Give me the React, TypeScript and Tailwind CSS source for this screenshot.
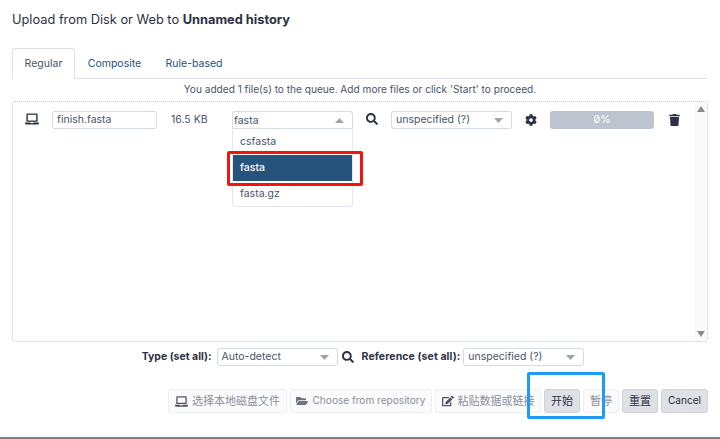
import { FaLaptop, FaSearch, FaCog, FaTrash, FaFolderOpen, FaEdit } from 'react-icons/fa';

const font = { fontFamily: 'Inter, "Noto Sans CJK SC", sans-serif' };

const Caret = ({ up = false }: { up?: boolean }) => (
    <svg width="9" height="5" viewBox="0 0 9 5" className="shrink-0">
        <path d={up ? 'M4.5 0L9 5H0z' : 'M0 0h9L4.5 5z'} fill="#9ca3af" />
    </svg>
);

const SelectBox = ({ label, className }: { label: string; className: string }) => (
    <div className={`h-[18px] flex items-center justify-between pl-1 pr-2 bg-white border border-[#d5dae3] rounded-[3px] text-[10.5px] text-[#4b5468] ${className}`}>
        <span>{label}</span>
        <Caret />
    </div>
);

const FooterButton = ({ children, className }: { children: React.ReactNode; className: string }) => (
    <div className={`h-6 flex items-center justify-center gap-1 rounded-[3px] border whitespace-nowrap ${className}`}>{children}</div>
);

export default function App() {
    return (
        <div style={font} className="relative w-[720px] h-[439px] bg-white overflow-hidden border-b-2 border-[#7b7f86] text-[#2c3143]">
            <h1 className="pl-3 pt-[11px] h-[48px] text-[12.8px] leading-[18px] whitespace-nowrap">
                Upload from Disk or Web to <b className="font-bold">Unnamed history</b>
            </h1>

            <div className="ml-3 mr-[13px] h-[31px] flex border-b border-[#dee2e8] text-[10.5px] text-[#25537b]">
                <div className="w-[63px] h-[31px] pt-[1px] flex items-center justify-center bg-white border border-[#dee2e8] border-b-white rounded-t-[3px] text-[#4b5468]">Regular</div>
                <div className="w-[79px] pt-[2px] flex items-center justify-center">Composite</div>
                <div className="w-[80px] pt-[2px] flex items-center justify-center whitespace-nowrap">Rule-based</div>
            </div>

            <p className="h-[22px] flex items-center justify-center text-[10.1px] text-[#4b5468] whitespace-nowrap">
                You added 1 file(s) to the queue. Add more files or click 'Start' to proceed.
            </p>

            <div className="relative ml-3 mr-3 h-[241px] border border-dotted border-[#c4c8cf] rounded-[3px] flex">
                <div className="flex-1 flex items-start pt-[9px] h-fit">
                    <FaLaptop className="ml-3 mt-[1px] w-[14px] h-[14px] text-[#2c3143]" />
                    <div className="ml-[13px] w-[105px] h-[18px] flex items-center px-1 border border-[#d5dae3] rounded-[3px] text-[10.5px] text-[#4b5468]">finish.fasta</div>
                    <span className="ml-[14px] w-[61px] leading-[18px] text-[10.5px] text-[#4b5468]">16.5 KB</span>
                    <div className="w-[121px] h-[18px] flex items-center justify-between pl-[1px] pr-2 border border-[#d5dae3] rounded-t-[3px] text-[10.5px] text-[#4b5468]">
                        <span className="pt-[2px]">fasta</span>
                        <Caret up />
                    </div>
                    <FaSearch className="ml-[13px] mt-[2px] w-3 h-3 text-[#2c3143]" />
                    <SelectBox label="unspecified (?)" className="ml-[13px] w-[121px] pl-[4px]" />
                    <FaCog className="ml-[13px] mt-[3px] w-3 h-3 text-[#2c3143]" />
                    <div className="ml-[13px] w-[104px] h-[18px] flex items-center justify-center rounded-[3px] bg-[#bcc4cf] text-[10.5px] text-white slashed-zero">0%</div>
                    <FaTrash className="ml-[15px] mt-[3px] w-[11px] h-3 text-[#2c3143]" />
                </div>
                <div className="w-[12px] bg-[#fafafa] flex flex-col items-center justify-between py-[4px]">
                    <svg width="8" height="6" viewBox="0 0 8 6"><path d="M4 0l4 6H0z" fill="#8b8b8b" /></svg>
                    <svg width="8" height="6" viewBox="0 0 8 6"><path d="M0 0h8L4 6z" fill="#8b8b8b" /></svg>
                </div>

                {/* open format dropdown */}
                <div className="absolute left-[219px] top-[27px] w-[121px] h-[78px] bg-white border border-t-0 border-[#e4e7ec] rounded-b-[3px] text-[10.5px] text-[#4b5468]">
                    <div className="h-[26px] pl-[7px] flex items-center">csfasta</div>
                    <div className="h-[26px] pl-[7px] flex items-center bg-[#25537b] text-white font-medium">fasta</div>
                    <div className="h-[26px] pl-[7px] flex items-center">fasta.gz</div>
                </div>
            </div>

            <div className="h-[28px] mt-[1px] pl-[6px] flex items-center justify-center text-[10.5px]">
                <b className="font-bold whitespace-nowrap">Type (set all):</b>
                <SelectBox label="Auto-detect" className="ml-[5px] w-[121px]" />
                <FaSearch className="ml-1 w-3 h-3 text-[#2c3143]" />
                <b className="ml-[8px] font-bold whitespace-nowrap tracking-[0.1px]">Reference (set all):</b>
                <SelectBox label="unspecified (?)" className="ml-[3px] w-[121px]" />
            </div>

            <div className="mt-[18px] pr-3 flex justify-end gap-[3px] text-[#8a8f9a]">
                <FooterButton className="w-[119px] text-[11px] bg-[#fbfbfc] border-[#edeff2]"><FaLaptop className="w-[13px] h-[13px] text-[#4b5468]" />选择本地磁盘文件</FooterButton>
                <FooterButton className="w-[142px] text-[10.1px] bg-[#fbfbfc] border-[#edeff2]"><FaFolderOpen className="w-3 h-3 text-[#6b7280]" />Choose from repository</FooterButton>
                <FooterButton className="w-[106px] text-[11px] bg-[#fbfbfc] border-[#edeff2]"><FaEdit className="w-3 h-3 text-[#4b5468]" />粘贴数据或链接</FooterButton>
                <FooterButton className="w-[36px] text-[11px] bg-[#dde0e5] border-[#cfd3d9] text-[#2c3143]">开始</FooterButton>
                <FooterButton className="w-[36px] text-[11px] bg-[#fbfbfc] border-[#edeff2]">暂停</FooterButton>
                <FooterButton className="w-[36px] text-[11px] bg-[#dde0e5] border-[#cfd3d9] text-[#2c3143]">重置</FooterButton>
                <FooterButton className="w-[47px] text-[10.1px] bg-[#dde0e5] border-[#cfd3d9] text-[#2c3143]">Cancel</FooterButton>
            </div>

            {/* annotation boxes drawn on top of the screenshot */}
            <div className="absolute left-[227px] top-[151px] w-[136px] h-[35px] border-[3px] border-[#f5130d] rounded-[2px]" />
            <div className="absolute left-[527px] top-[372px] w-[78px] h-[47px] border-[3px] border-[#1e9bf5] rounded-[2px]" />
        </div>
    );
}
